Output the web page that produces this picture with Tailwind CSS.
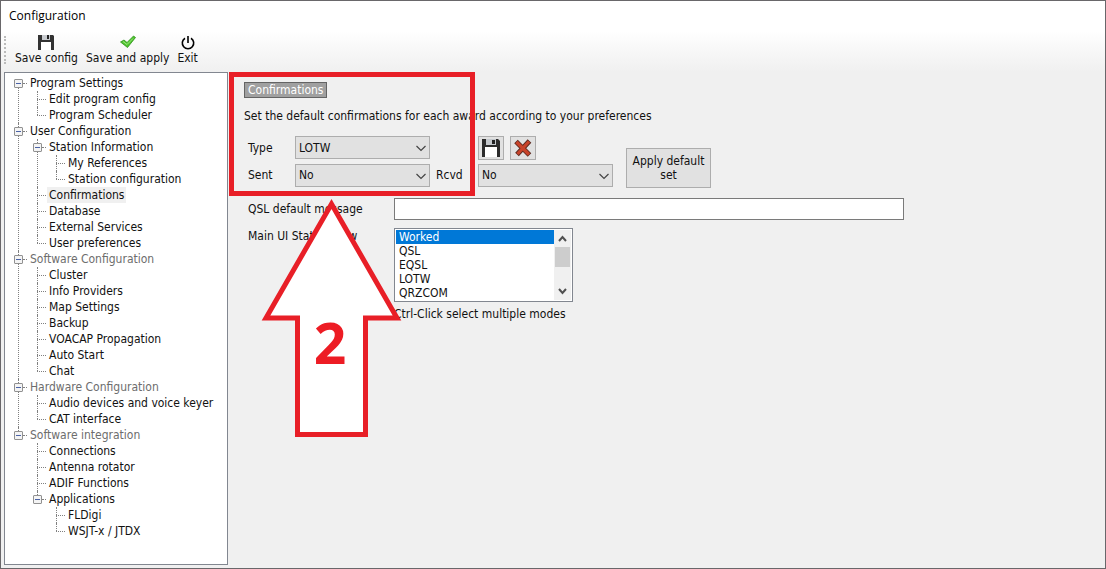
<!DOCTYPE html>
<html lang="en">
<head>
    <meta charset="UTF-8">
    <meta name="viewport" content="width=device-width, initial-scale=1.0">
    <title>Configuration</title>
    <script src="https://cdn.jsdelivr.net/npm/@tailwindcss/browser@4"></script>
</head>
<body class="relative flex h-screen flex-col overflow-hidden border border-[#69676a] bg-[#f0f0f0] font-['DejaVu_Sans_Condensed','DejaVu_Sans',sans-serif] text-[12px] leading-4 text-[#111]">

    <!-- Title bar -->
    <header class="bg-white px-2 pt-[7px] pb-[7px] font-['Open_Sans',sans-serif] text-[12px] text-black">Configuration</header>

    <!-- Toolbar -->
    <nav class="flex h-[41px] shrink-0 items-center bg-linear-to-b from-white via-[#f7f7f7] to-[#f0f0f0] pb-[3px] pl-[3px]">
        <span class="mr-[9px] h-7 border-l-2 border-dotted border-[#bbb]"></span>
        <div class="flex gap-2">
            <button class="flex flex-col items-center">
                <svg class="size-4" viewBox="0 0 16 16">
                    <path d="M0 1h15l1 1v14H0z" fill="#333"/>
                    <path d="M4 1h8v5H4z" fill="#c9ccd0"/>
                    <path d="M9 1h2v4H9z" fill="#222"/>
                    <path d="M3 8h10v8H3z" fill="#fff"/>
                </svg>
                Save config
            </button>
            <button class="flex flex-col items-center">
                <svg class="size-4" viewBox="0 0 16 16">
                    <path d="M.5 8l3.500-2 3 2.500L13.500 2l2 1.500L7.500 13.500z" fill="#4fc52e" stroke="#2e8f1c" stroke-width=".8" stroke-linejoin="round"/>
                    <path d="M3 7.500l4 3 6-6" fill="none" stroke="#9be67f" stroke-width="1"/>
                </svg>
                Save and apply
            </button>
            <button class="flex flex-col items-center">
                <svg class="size-4" viewBox="0 0 16 16" fill="none" stroke="#000" stroke-width="1.600">
                    <path d="M5 4.200a5.700 5.700 0 1 0 6 0M8 2v7"/>
                </svg>
                Exit
            </button>
        </div>
    </nav>

    <div class="flex min-h-0 grow pl-[3px] pb-[3px]">

        <!-- Settings tree -->
        <aside class="w-56 shrink-0 border border-[#828790] bg-white pt-[2px] pl-[9px] whitespace-nowrap [&_li]:relative [&_li]:before:absolute [&_li]:before:top-0 [&_li]:before:bottom-0 [&_li]:before:left-1 [&_li]:before:border-l [&_li]:before:border-dotted [&_li]:before:border-[#808080] [&_li:last-child]:before:bottom-auto [&_li:last-child]:before:h-2 [&_ol>li:first-child]:before:top-2 [&_ul]:pl-[19px] [&_a]:relative [&_a]:flex [&_a]:h-4 [&_a]:items-center [&_a]:pl-4 [&_a]:before:absolute [&_a]:before:left-1 [&_a]:before:w-[9px] [&_a]:before:border-t [&_a]:before:border-dotted [&_a]:before:border-[#808080] [&_div]:flex [&_div]:h-4 [&_div]:items-center [&_i]:mr-[3px] [&_i]:w-1 [&_i]:border-t [&_i]:border-dotted [&_i]:border-[#808080] [&_button]:relative [&_button]:grid [&_button]:size-[9px] [&_button]:place-items-center [&_button]:rounded-[1px] [&_button]:border [&_button]:border-[#919191] [&_button]:bg-[#f4f4f4] [&_button]:before:h-px [&_button]:before:w-[5px] [&_button]:before:bg-[#4b63a7]">
            <ol>
                <li>
                    <div><button aria-label="Collapse"></button><i></i>Program Settings</div>
                    <ul>
                        <li><a href="#">Edit program config</a></li>
                        <li><a href="#">Program Scheduler</a></li>
                    </ul>
                </li>
                <li>
                    <div><button aria-label="Collapse"></button><i></i>User Configuration</div>
                    <ul>
                        <li>
                            <div><button aria-label="Collapse"></button><i></i>Station Information</div>
                            <ul>
                                <li><a href="#">My References</a></li>
                                <li><a href="#">Station configuration</a></li>
                            </ul>
                        </li>
                        <li><a href="#"><span class="-mx-[2px] bg-[#f0f0f0] px-[2px]">Confirmations</span></a></li>
                        <li><a href="#">Database</a></li>
                        <li><a href="#">External Services</a></li>
                        <li><a href="#">User preferences</a></li>
                    </ul>
                </li>
                <li>
                    <div class="text-[#6d6d6d]"><button aria-label="Collapse"></button><i></i>Software Configuration</div>
                    <ul>
                        <li><a href="#">Cluster</a></li>
                        <li><a href="#">Info Providers</a></li>
                        <li><a href="#">Map Settings</a></li>
                        <li><a href="#">Backup</a></li>
                        <li><a href="#">VOACAP Propagation</a></li>
                        <li><a href="#">Auto Start</a></li>
                        <li><a href="#">Chat</a></li>
                    </ul>
                </li>
                <li>
                    <div class="text-[#6d6d6d]"><button aria-label="Collapse"></button><i></i>Hardware Configuration</div>
                    <ul>
                        <li><a href="#">Audio devices and voice keyer</a></li>
                        <li><a href="#">CAT interface</a></li>
                    </ul>
                </li>
                <li>
                    <div class="text-[#6d6d6d]"><button aria-label="Collapse"></button><i></i>Software integration</div>
                    <ul>
                        <li><a href="#">Connections</a></li>
                        <li><a href="#">Antenna rotator</a></li>
                        <li><a href="#">ADIF Functions</a></li>
                        <li>
                            <div><button aria-label="Collapse"></button><i></i>Applications</div>
                            <ul>
                                <li><a href="#">FLDigi</a></li>
                                <li><a href="#">WSJT-x / JTDX</a></li>
                            </ul>
                        </li>
                    </ul>
                </li>
            </ol>
        </aside>

        <!-- Confirmations page -->
        <main class="min-w-0 grow pt-[10px] pl-4">
            <h1 class="w-fit border border-[#646464] bg-[#a0a0a0] px-[3px] leading-[14px] text-white">Confirmations</h1>
            <p class="mt-[10px]">Set the default confirmations for each award according to your preferences</p>

            <div class="mt-[10px] flex items-center pl-1">
                <div class="grid grid-cols-[47px_135px_48px_135px] items-center gap-y-1">
                    <label for="type">Type</label>
                    <div class="relative">
                        <select id="type" class="block h-[23px] w-full appearance-none border border-[#adadad] bg-[#e1e1e1] px-[3px]"><option>LOTW</option></select>
                        <svg class="pointer-events-none absolute top-2 right-1 h-2 w-[10px]" viewBox="0 0 10 8" fill="none" stroke="#444" stroke-width="1.200"><path d="M.5 2L5 6.500 9.500 2"/></svg>
                    </div>
                    <span></span>
                    <div class="flex gap-[6px]">
                        <button aria-label="Save" class="grid h-6 w-[26px] place-items-center border border-[#adadad] bg-[#e1e1e1]">
                            <svg class="h-[18px] w-5" viewBox="0 0 20 18">
                                <path d="M1 0h16l2 2v16H1z" fill="#2b2b2b"/>
                                <path d="M5 0h10v6H5z" fill="#c4c8cc"/>
                                <path d="M11 1h3v4h-3z" fill="#222"/>
                                <path d="M4 8h12v10H4z" fill="#fff"/>
                            </svg>
                        </button>
                        <button aria-label="Delete" class="grid h-6 w-[26px] place-items-center border border-[#adadad] bg-[#e1e1e1]">
                            <svg class="h-[18px] w-5" viewBox="0 0 20 18" fill="none">
                                <path d="M3 2.500l13.500 13.500M16.500 2L4 15.500" stroke="#5c2a20" stroke-width="5"/>
                                <path d="M3.500 3l12.500 12.500M16 2.500L4.500 15" stroke="#c8432a" stroke-width="3.200"/>
                            </svg>
                        </button>
                    </div>
                    <label for="sent">Sent</label>
                    <div class="relative">
                        <select id="sent" class="block h-[23px] w-full appearance-none border border-[#adadad] bg-[#e1e1e1] px-[3px]"><option>No</option></select>
                        <svg class="pointer-events-none absolute top-2 right-1 h-2 w-[10px]" viewBox="0 0 10 8" fill="none" stroke="#444" stroke-width="1.200"><path d="M.5 2L5 6.500 9.500 2"/></svg>
                    </div>
                    <label for="rcvd" class="pl-[6px]">Rcvd</label>
                    <div class="relative">
                        <select id="rcvd" class="block h-[23px] w-full appearance-none border border-[#adadad] bg-[#e1e1e1] px-[3px]"><option>No</option></select>
                        <svg class="pointer-events-none absolute top-2 right-1 h-2 w-[10px]" viewBox="0 0 10 8" fill="none" stroke="#444" stroke-width="1.200"><path d="M.5 2L5 6.500 9.500 2"/></svg>
                    </div>
                </div>
                <button class="mt-[14px] ml-[13px] h-10 w-[85px] border border-[#adadad] bg-[#e1e1e1] leading-[14px]">Apply default set</button>
            </div>

            <div class="mt-[10px] mr-[201px] grid grid-cols-[146px_1fr] gap-y-2 pl-1">
                <label for="message" class="pt-[3px]">QSL default message</label>
                <input id="message" type="text" class="h-[22px] border border-[#7a7a7a] bg-white px-1">
                <label for="status" class="whitespace-nowrap">Main UI Status show</label>
                <div>
                    <div class="flex h-[74px] w-[179px] border border-[#828790] bg-white p-px">
                        <select id="status" multiple size="5" class="h-[70px] min-w-0 grow appearance-none overflow-hidden bg-white [&>option]:h-[14px] [&>option]:min-h-0 [&>option]:px-[3px] [&>option]:py-0 [&>option]:leading-[14px]">
                            <option selected class="bg-linear-to-b from-[#0078d7] to-[#0078d7] text-white">Worked</option>
                            <option>QSL</option>
                            <option>EQSL</option>
                            <option>LOTW</option>
                            <option>QRZCOM</option>
                        </select>
                        <div class="flex w-[17px] shrink-0 flex-col items-center bg-[#f0f0f0]">
                            <svg class="h-[17px] w-[9px]" viewBox="0 0 9 17" fill="none" stroke="#505050" stroke-width="2"><path d="M1 11l3.500-4L8 11"/></svg>
                            <span class="h-5 w-[15px] bg-[#cdcdcd]"></span>
                            <svg class="mt-auto h-[17px] w-[9px]" viewBox="0 0 9 17" fill="none" stroke="#505050" stroke-width="2"><path d="M1 6l3.500 4L8 6"/></svg>
                        </div>
                    </div>
                    <p class="mt-1">Ctrl-Click select multiple modes</p>
                </div>
            </div>
        </main>
    </div>

    <!-- Step callout over the form -->
    <svg class="pointer-events-none absolute -top-px -left-px h-[440px] w-[480px]" viewBox="0 0 480 440" fill="none" stroke="#e81f27" stroke-width="5">
        <rect x="231.500" y="74.500" width="241" height="119"/>
        <path d="M331.500 204L397 318H365.500V434.500H297.500V318H266z" fill="#fff"/>
        <text x="330" y="364" text-anchor="middle" fill="#ed1c24" stroke="none" class="font-['Open_Sans',sans-serif] text-[57px] font-bold">2</text>
    </svg>

</body>
</html>
